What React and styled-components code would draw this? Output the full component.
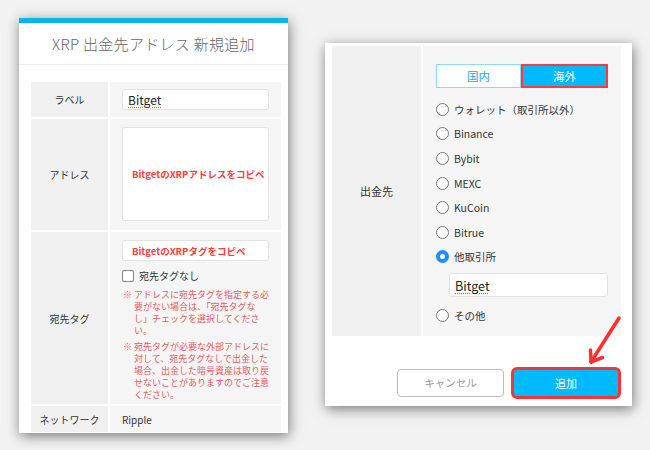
import React from "react";
import styled, { createGlobalStyle } from "styled-components";

const Global = createGlobalStyle`
  html, body { margin: 0; padding: 0; background: #f2f2f2; }
  body { font-family: "Noto Sans CJK JP", "Noto Sans", sans-serif; color: #333; }
  * { box-sizing: border-box; }
`;

const Stage = styled.div`
  position: relative;
  width: 650px;
  height: 450px;
  display: flex;
  align-items: flex-start;
  gap: 37px;
  padding: 18px 0 0 19px;
`;

const LeftPanel = styled.div`
  width: 269px;
  height: 415px;
  background: #fff;
  overflow: hidden;
  box-shadow: 1px 3px 12px rgba(0, 0, 0, 0.5);
  display: flex;
  flex-direction: column;
`;

const TopBar = styled.div`
  height: 5px;
  background: #00b5f0;
  flex: none;
`;

const Header = styled.div`
  height: 42px;
  flex: none;
  display: flex;
  align-items: center;
  justify-content: center;
  font-size: 15px;
  font-weight: 300;
  color: #666;
  letter-spacing: 0.3px;
  border-bottom: 1px solid #ececec;
`;

const LeftBody = styled.div`
  padding: 17px 7px 0 12px;
`;

const FormGrid = styled.div`
  display: grid;
  grid-template-columns: ${(p) => p.$label}px 1fr;
  gap: 2px;
`;

const LabelCell = styled.div`
  background: #f0f0f0;
  display: flex;
  align-items: center;
  justify-content: center;
  font-size: ${(p) => p.$size || 10}px;
  color: #333;
`;

const ValueCell = styled.div`
  background: #f5f5f5;
  padding: ${(p) => p.$pad};
  min-height: ${(p) => p.$h || 0}px;
  display: flex;
  flex-direction: column;
  justify-content: ${(p) => (p.$center ? "center" : "flex-start")};
  font-size: 10px;
`;

const TextInput = styled.div`
  height: ${(p) => p.$h}px;
  background: #fff;
  border: 1px solid #e2e2e2;
  border-radius: 3px;
  display: flex;
  align-items: center;
  padding-left: ${(p) => p.$pl || 5}px;
  font-size: ${(p) => p.$fs || 12}px;
  color: #222;
`;

const Spell = styled.span`
  text-decoration: underline dotted #e05050;
  text-underline-offset: 2px;
`;

const TextArea = styled.div`
  height: 94px;
  background: #fff;
  border: 1px solid #e2e2e2;
  border-radius: 3px;
  display: flex;
  align-items: center;
  padding-left: 9px;
`;

const Hint = styled.span`
  color: #ff3b3b;
  font-weight: 700;
  font-size: 9.5px;
  white-space: nowrap;
`;

const CheckRow = styled.div`
  display: flex;
  align-items: center;
  gap: 5px;
  margin-top: 7px;
  font-size: 10px;
  color: #333;
`;

const CheckBox = styled.span`
  width: 12px;
  height: 12px;
  border: 1px solid #888;
  border-radius: 2px;
  background: #fff;
  flex: none;
`;

const Note = styled.p`
  margin: ${(p) => p.$mt}px 0 0 1px;
  padding-left: 11px;
  text-indent: -11px;
  font-size: 9px;
  line-height: 12px;
  color: #e85c5c;
  white-space: nowrap;
`;

const RightPanel = styled.div`
  margin-top: 25px;
  width: 307px;
  height: 363px;
  background: #fff;
  box-shadow: 1px 3px 12px rgba(0, 0, 0, 0.5);
  padding: 3px 11px 0 7px;
  display: flex;
  flex-direction: column;
`;

const Tabs = styled.div`
  display: flex;
  height: 24px;
`;

const Tab = styled.div`
  flex: 1;
  display: flex;
  align-items: center;
  justify-content: center;
  font-size: 11.5px;
  background: ${(p) => (p.$active ? "#00b9ff" : "#fff")};
  color: ${(p) => (p.$active ? "#fff" : "#1aa7e6")};
  border: ${(p) => (p.$active ? "2px solid #ff3a3a" : "1.5px solid #8ed8ff")};
`;

const RadioList = styled.div`
  margin-top: 9px;
  display: flex;
  flex-direction: column;
`;

const RadioRow = styled.div`
  height: 24.6px;
  display: flex;
  align-items: center;
  gap: 5px;
  font-size: 10.5px;
  color: #333;
  margin-top: ${(p) => p.$mt || 0}px;
`;

const RadioDot = styled.span`
  width: 13px;
  height: 13px;
  border-radius: 50%;
  flex: none;
  background: #fff;
  border: ${(p) => (p.$on ? "4px solid #1f8cff" : "1.3px solid #777")};
`;

const SubInput = styled(TextInput)`
  margin: 4px 0 0 13px;
`;

const Footer = styled.div`
  margin-top: 31px;
  display: flex;
  justify-content: flex-end;
  align-items: center;
  gap: 7px;
`;

const CancelButton = styled.div`
  width: 107px;
  height: 28px;
  border: 1px solid #bdbdbd;
  border-radius: 4px;
  display: flex;
  align-items: center;
  justify-content: center;
  font-size: 10.5px;
  color: #999;
  background: #fff;
`;

const AddButton = styled.div`
  width: 110px;
  height: 32px;
  border: 3px solid #ff3232;
  border-radius: 6px;
  background: #00b9ff;
  display: flex;
  align-items: center;
  justify-content: center;
  font-size: 11px;
  color: #fff;
`;

const Arrow = styled.svg`
  position: absolute;
  left: 580px;
  top: 308px;
  width: 50px;
  height: 62px;
  overflow: visible;
`;

const exchanges = ["ウォレット（取引所以外）", "Binance", "Bybit", "MEXC", "KuCoin", "Bitrue", "他取引所"];

export default function App() {
  return (
    <>
      <Global />
      <Stage>
        <LeftPanel>
          <TopBar />
          <Header>XRP 出金先アドレス 新規追加</Header>
          <LeftBody>
            <FormGrid $label={77}>
              <LabelCell>ラベル</LabelCell>
              <ValueCell $pad="7px 12px">
                <TextInput $h={21} $fs={12}>
                  <Spell>Bitget</Spell>
                </TextInput>
              </ValueCell>

              <LabelCell>アドレス</LabelCell>
              <ValueCell $pad="8px 12px 9px">
                <TextArea>
                  <Hint>BitgetのXRPアドレスをコピペ</Hint>
                </TextArea>
              </ValueCell>

              <LabelCell>宛先タグ</LabelCell>
              <ValueCell $pad="8px 12px 3px">
                <TextInput $h={21} $pl={9}>
                  <Hint>BitgetのXRPタグをコピペ</Hint>
                </TextInput>
                <CheckRow>
                  <CheckBox />
                  宛先タグなし
                </CheckRow>
                <Note $mt={6}>
                  ※ アドレスに宛先タグを指定する必<br />
                  要がない場合は、「宛先タグな<br />
                  し」チェックを選択してくださ<br />
                  い。
                </Note>
                <Note $mt={4}>
                  ※ 宛先タグが必要な外部アドレスに<br />
                  対して、宛先タグなしで出金した<br />
                  場合、出金した暗号資産は取り戻<br />
                  せないことがありますのでご注意<br />
                  ください。
                </Note>
              </ValueCell>

              <LabelCell>ネットワーク</LabelCell>
              <ValueCell $pad="0 12px" $h={26} $center>
                Ripple
              </ValueCell>
            </FormGrid>
          </LeftBody>
        </LeftPanel>

        <RightPanel>
          <FormGrid $label={89}>
            <LabelCell $size={11}>出金先</LabelCell>
            <ValueCell $pad="18px 13px 8px">
              <Tabs>
                <Tab>国内</Tab>
                <Tab $active>海外</Tab>
              </Tabs>
              <RadioList>
                {exchanges.map((name) => (
                  <RadioRow key={name}>
                    <RadioDot $on={name === "他取引所"} />
                    {name}
                  </RadioRow>
                ))}
                <SubInput $h={24} $fs={12.5}>
                  <Spell>Bitget</Spell>
                </SubInput>
                <RadioRow $mt={6}>
                  <RadioDot />
                  その他
                </RadioRow>
              </RadioList>
            </ValueCell>
          </FormGrid>
          <Footer>
            <CancelButton>キャンセル</CancelButton>
            <AddButton>追加</AddButton>
          </Footer>
        </RightPanel>

        <Arrow viewBox="0 0 50 62">
          <g stroke="#ff3030" strokeWidth="3.5" strokeLinecap="round" strokeLinejoin="round" fill="none">
            <line x1="39" y1="10" x2="11" y2="54" />
            <polyline points="10.5,42 11,54 22.5,49.5" />
          </g>
        </Arrow>
      </Stage>
    </>
  );
}
